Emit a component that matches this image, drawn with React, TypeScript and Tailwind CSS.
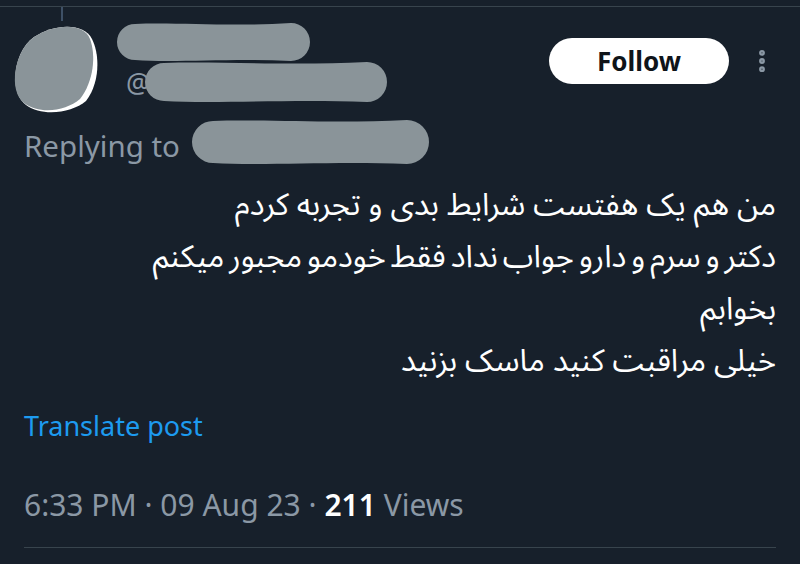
import { MoreVertical } from "lucide-react";

const persian = [
  "من هم یک هفتست شرایط بدی و تجربه کردم",
  "دکتر و سرم و دارو جواب نداد فقط خودمو مجبور میکنم",
  "بخوابم",
  "خیلی مراقبت کنید ماسک بزنید",
];

function Scribble({ w, h, className }: { w: number; h: number; className?: string }) {
  // redaction stroke drawn over hidden text
  const r = h / 2;
  return (
    <svg width={w} height={h} viewBox={`0 0 ${w} ${h}`} className={className}>
      <path
        d={`M ${r} 2 C ${w * 0.3} 0, ${w * 0.6} 5, ${w - r} 1 A ${r - 1} ${r - 1} 0 0 1 ${w - r} ${h - 1} C ${w * 0.6} ${h - 4}, ${w * 0.3} ${h + 1}, ${r} ${h - 2} A ${r - 2} ${r - 2} 0 0 1 ${r} 2 Z`}
        fill="#8a9499"
      />
    </svg>
  );
}

export default function App() {
  return (
    <div className="h-[564px] w-[800px] overflow-hidden bg-[#17202b] font-['Noto_Sans','Liberation_Sans',sans-serif] text-[#e7e9ea]">
      <div className="h-[6px]" />
      <div className="border-t border-[#38444d]" />
      <div className="ml-[61px] h-[14px] w-[2px] bg-[#3e5066]" />

      <div className="flex items-start">
        <svg width="100" height="94" viewBox="0 0 100 94" className="shrink-0">
          <path
            d="M 26 84 C 8 70, 14 30, 34 16 C 56 2, 84 2, 92 18 C 100 34, 100 62, 86 80 C 72 92, 42 96, 26 84 Z"
            fill="#fff"
          />
          <path
            d="M 24 82 C 8 70, 14 30, 34 16 C 56 2, 84 2, 90 18 C 96 34, 94 60, 80 78 C 66 90, 40 94, 24 82 Z"
            fill="#8a9499"
          />
        </svg>

        <div className="ml-[15px] flex flex-col">
          <Scribble w={196} h={40} className="mt-[1px]" />
          <div className="relative -mt-[1px] flex h-[43px] items-center">
            <span className="ml-[11px] text-[27px] leading-none text-[#8b98a5]">@</span>
            <Scribble w={245} h={42} className="absolute left-[28px] top-0" />
          </div>
        </div>

        <div className="ml-auto mt-[17px] flex items-center">
          <button className="flex h-[46px] w-[180px] items-center justify-center rounded-full bg-white text-[26px] font-bold text-[#0f1419]">
            Follow
          </button>
          <MoreVertical className="ml-[19px] mr-[24px] text-[#8b98a5]" size={28} strokeWidth={3} />
        </div>
      </div>

      <div className="mt-[13px] flex h-[36px] items-center pl-[24px]">
        <span className="text-[29.5px] leading-none text-[#8b98a5]">Replying to</span>
        <Scribble w={240} h={46} className="-mt-[9px] ml-[10px]" />
      </div>

      <div
        dir="rtl"
        className="mt-[15px] pr-[24px] font-['Noto_Sans_Arabic','DejaVu_Sans',sans-serif] text-[31px] leading-[52px] text-white"
      >
        {persian.map((line, i) => (
          <p key={line} className={i === 1 ? "whitespace-nowrap [word-spacing:-3px]" : "whitespace-nowrap"}>
            {line}
          </p>
        ))}
      </div>

      <div className="mt-[25px] pl-[24px] text-[27px] leading-none text-[#1d9bf0]">Translate post</div>

      <div className="mt-[51px] pl-[24px] text-[30px] leading-none text-[#8b98a5]">
        6:33 PM · 09 Aug 23 · <span className="font-semibold text-white">211</span> Views
      </div>

      <div className="mx-[24px] mt-[27px] border-t border-[#38444d]" />
    </div>
  );
}
